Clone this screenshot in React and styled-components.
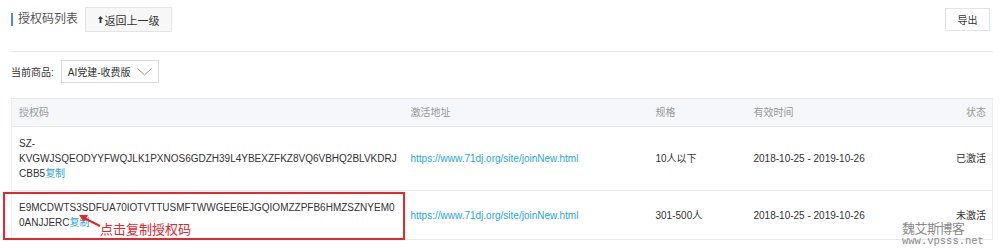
import React from "react";
import styled, { createGlobalStyle } from "styled-components";

const GlobalStyle = createGlobalStyle`
  html, body {
    margin: 0;
    padding: 0;
    background: #fff;
  }
  body {
    font-family: "Liberation Sans", "Noto Sans CJK SC", sans-serif;
    font-size: 10px;
    color: #333;
  }
`;

const Page = styled.div`
  position: relative;
  width: 982px;
  height: 249px;
  padding: 7px 0 0 11px;
  overflow: hidden;
`;

const TopBar = styled.div`
  display: flex;
  align-items: center;
  justify-content: space-between;
  height: 25px;
`;

const TitleGroup = styled.div`
  display: flex;
  align-items: center;
  gap: 7px;
`;

const Title = styled.h2`
  margin: 0;
  border-left: 2px solid #4f8fd6;
  padding-left: 5px;
  height: 13px;
  line-height: 13px;
  font-size: 12px;
  font-weight: normal;
  color: #555;
`;

const Button = styled.button`
  display: flex;
  align-items: center;
  justify-content: center;
  gap: 2px;
  box-sizing: border-box;
  width: ${(p) => p.$w}px;
  height: ${(p) => p.$h}px;
  margin-right: ${(p) => p.$mr || 0}px;
  padding: 0;
  border: 1px solid #e4e4e4;
  background: ${(p) => (p.$muted ? "#f7f7f7" : "#fff")};
  font-family: inherit;
  font-size: ${(p) => p.$fs || 10}px;
  color: #333;
`;

const Divider = styled.div`
  margin-top: 19px;
  height: 1px;
  background: #e8e8e8;
`;

const FilterRow = styled.div`
  display: flex;
  align-items: center;
  gap: 7px;
  margin-top: 8px;
  height: 23px;
`;

const Label = styled.span`
  color: #333;
`;

const Select = styled.div`
  display: flex;
  align-items: center;
  box-sizing: border-box;
  width: 98px;
  height: 23px;
  padding: 0 6px;
  border: 1px solid #dcdcdc;
  color: #333;
  svg {
    margin-left: auto;
  }
`;

const Table = styled.table`
  margin-top: 15px;
  width: 982px;
  border-collapse: collapse;
  table-layout: fixed;
  border-left: 1px solid #eef0f3;
  border-right: 1px solid #eef0f3;
`;

const Th = styled.th`
  padding: 6px ${(p) => (p.$right ? 6 : 4)}px 6px 7px;
  line-height: 15px;
  text-align: ${(p) => (p.$right ? "right" : "left")};
  font-weight: normal;
  color: #999;
  background: #f5f7fa;
  border-top: 1px solid #e6e9ee;
  border-bottom: 1px solid #e6e9ee;
`;

const Td = styled.td`
  padding: 9px ${(p) => (p.$right ? 6 : 4)}px 9px 7px;
  line-height: 15px;
  text-align: ${(p) => (p.$right ? "right" : "left")};
  vertical-align: middle;
  color: #333;
  border-bottom: 1px solid #e6e9ee;
  overflow-wrap: break-word;
`;

const Link = styled.a`
  color: #24a9de;
  text-decoration: none;
`;

const Highlight = styled.div`
  position: absolute;
  left: 3px;
  top: 192px;
  width: 402px;
  height: 48px;
  box-sizing: border-box;
  border: 2px solid #e5262c;
`;

const Arrow = styled.svg`
  position: absolute;
  left: 78px;
  top: 213px;
`;

const Note = styled.span`
  position: absolute;
  left: 100px;
  top: 220px;
  line-height: 17px;
  font-family: "Noto Sans CJK SC", sans-serif;
  font-size: 13px;
  color: #e5262c;
`;

const Watermark = styled.div`
  position: absolute;
  left: 902px;
  top: 221px;
  color: #8a8a8a;
  line-height: 1;
`;

const WatermarkName = styled.div`
  font-family: "Noto Sans CJK SC", sans-serif;
  font-size: 13px;
  letter-spacing: -0.5px;
`;

const WatermarkUrl = styled.div`
  margin-top: 2px;
  font-family: "Liberation Mono", monospace;
  font-size: 10.5px;
`;

const rows = [
  {
    code: "SZ-KVGWJSQEODYYFWQJLK1PXNOS6GDZH39L4YBEXZFKZ8VQ6VBHQ2BLVKDRJCBB5",
    spec: "10人以下",
    status: "已激活",
  },
  {
    code: "E9MCDWTS3SDFUA70IOTVTTUSMFTWWGEE6EJGQIOMZZPFB6HMZSZNYEM00ANJJERC",
    spec: "301-500人",
    status: "未激活",
  },
];

const UpArrow = () => (
  <svg width="5" height="7" viewBox="0 0 5 7">
    <path d="M2.5 0 L5 3 L3.4 3 L3.4 7 L1.6 7 L1.6 3 L0 3 Z" fill="#333" />
  </svg>
);

const Chevron = () => (
  <svg width="15" height="8" viewBox="0 0 15 8">
    <path d="M0.5 0.5 L7.5 7 L14.5 0.5" fill="none" stroke="#999" strokeWidth="1" />
  </svg>
);

export default function App() {
  return (
    <Page>
      <GlobalStyle />
      <TopBar>
        <TitleGroup>
          <Title>授权码列表</Title>
          <Button $w={87} $h={25} $fs={11} $muted>
            <UpArrow />
            返回上一级
          </Button>
        </TitleGroup>
        <Button $w={45} $h={23} $mr={3}>
          导出
        </Button>
      </TopBar>
      <Divider />
      <FilterRow>
        <Label>当前商品:</Label>
        <Select>
          AI党建-收费版
          <Chevron />
        </Select>
      </FilterRow>
      <Table>
        <colgroup>
          <col style={{ width: 392 }} />
          <col style={{ width: 245 }} />
          <col style={{ width: 98 }} />
          <col style={{ width: 160 }} />
          <col />
        </colgroup>
        <thead>
          <tr>
            <Th>授权码</Th>
            <Th>激活地址</Th>
            <Th>规格</Th>
            <Th>有效时间</Th>
            <Th $right>状态</Th>
          </tr>
        </thead>
        <tbody>
          {rows.map((row) => (
            <tr key={row.code}>
              <Td>
                {row.code}
                <Link>复制</Link>
              </Td>
              <Td>
                <Link>https://www.71dj.org/site/joinNew.html</Link>
              </Td>
              <Td>{row.spec}</Td>
              <Td>2018-10-25 - 2019-10-26</Td>
              <Td $right>{row.status}</Td>
            </tr>
          ))}
        </tbody>
      </Table>
      <Highlight />
      <Arrow width="24" height="16" viewBox="0 0 24 16">
        <path d="M22 13 L6 5" stroke="#e5262c" strokeWidth="2" />
        <path d="M1 2 L10 2 L6 9 Z" fill="#e5262c" />
      </Arrow>
      <Note>点击复制授权码</Note>
      <Watermark>
        <WatermarkName>魏艾斯博客</WatermarkName>
        <WatermarkUrl>www.vpsss.net</WatermarkUrl>
      </Watermark>
    </Page>
  );
}
